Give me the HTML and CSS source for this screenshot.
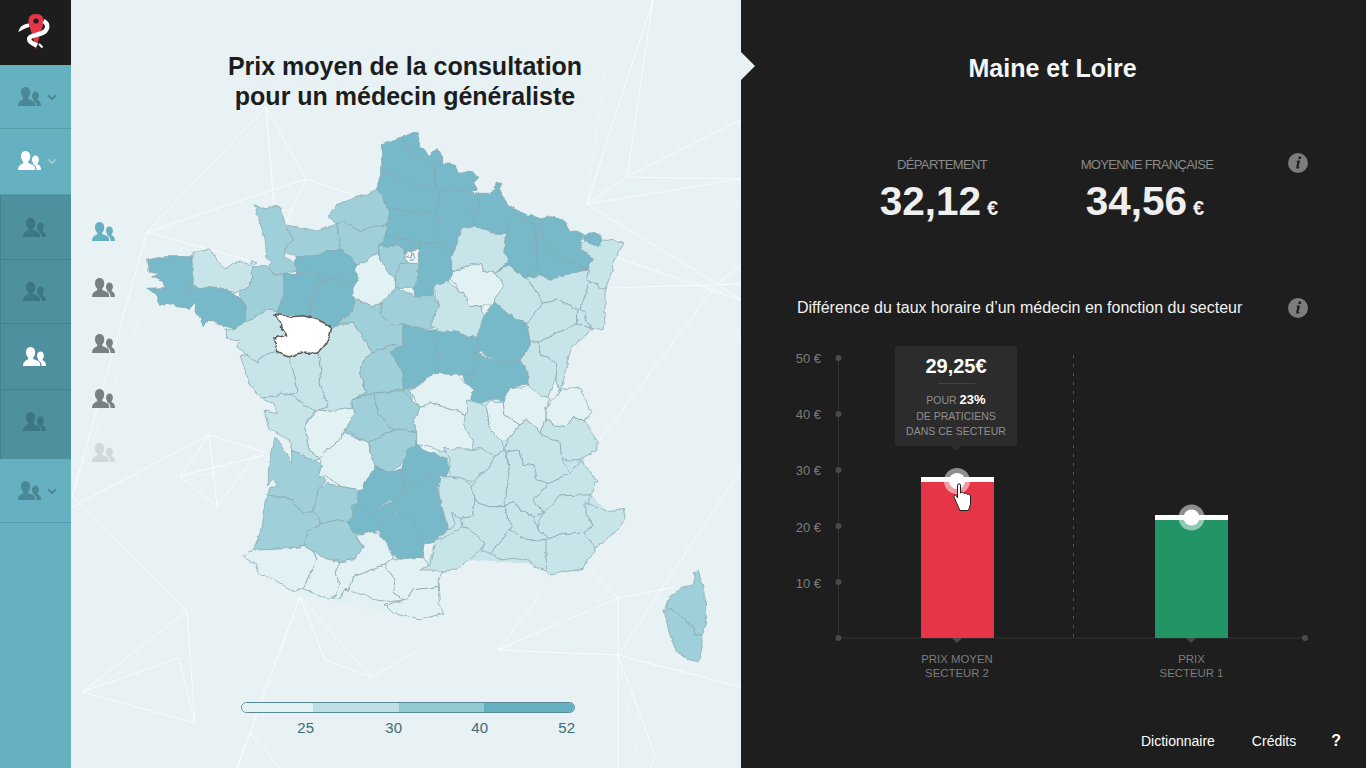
FILE: index.html
```html
<!DOCTYPE html>
<html lang="fr">
<head>
<meta charset="utf-8">
<title>Prix moyen de la consultation</title>
<link rel="stylesheet" href="styles.css">
</head>
<body>
<svg class="defs" width="0" height="0" aria-hidden="true">
  <filter id="rough" x="0" y="0" width="100%" height="100%" color-interpolation-filters="sRGB">
    <feTurbulence type="fractalNoise" baseFrequency=".13" numOctaves="2" seed="4" result="n"/>
    <feDisplacementMap in="SourceGraphic" in2="n" scale="4.500" xChannelSelector="R" yChannelSelector="G"/>
    <feGaussianBlur stdDeviation=".25"/>
  </filter>
  <symbol id="people" viewBox="0 0 23 19">
    <path d="M7.500 0C10.400 0 12.200 2.400 12.200 5.400C12.200 7.800 11.200 9.600 10.200 10.600V12C12.500 13 15.600 13.600 16.600 15.600C17 16.500 17.200 18 17.200 19H0C0 17.500 .2 16.300 .8 15.400C2 13.800 3.400 13.200 5.200 12.200V10.600C4 9.600 3 7.800 3 5.400C3 2.400 4.700 0 7.500 0Z"/>
    <path d="M17.500 4.400C19.500 4.400 20.900 6.200 20.900 8.400C20.900 10 20.200 11.300 19.600 12V13.200C21.200 14 23 14.800 23 19H18.600C18.600 17.400 18.200 15.600 17 14.400C16.400 13.900 15.800 13.500 15.200 13.200V12C14.600 11.300 14 10 14 8.400C14 6.200 15.500 4.400 17.500 4.400Z"/>
  </symbol>
  <symbol id="chev" viewBox="0 0 10 7">
    <path d="M1 1.200L5 5L9 1.200" fill="none" stroke="currentColor" stroke-width="2"/>
  </symbol>
  <symbol id="info" viewBox="0 0 20 20">
    <circle cx="10" cy="10" r="10" fill="#7c7c7c"/>
    <path d="M10.800 3.600h2.400l-.5 2.300h-2.400zM9.600 7.600h2.500l-1.600 6.300c-.1.500.4.400 1 .1l.2.800c-1.300 1-3.800 1.400-3.500-.5l1.200-5.200-1 .1.1-.8z" fill="#1e1e1e"/>
  </symbol>
</svg>

<div class="app">
  <nav class="side">
    <div class="logo">
      <svg width="71" height="65" viewBox="0 0 71 65">
        <path d="M18.500 32C19 27 24 23 30 23.500L29.500 27C26 27.500 22 30 18.500 32Z" fill="#fff"/>
        <path d="M36 14C41.500 14 44 17 43.500 22C43 27 39 36 36 50C33.500 36 29 27 28.500 22C28 17 30.500 14 36 14Z" fill="#e63546"/>
        <circle cx="36" cy="21" r="2.600" fill="#1d1d1d"/>
        <path d="M43.500 21C49 24 48.500 31 41 33.500C33 36 28 36 29.500 40.500C30.500 43 34 44 37 45.500" fill="none" stroke="#fff" stroke-width="4.500"/>
        <path d="M39 44L42.500 47.500" fill="none" stroke="#fff" stroke-width="2"/>
      </svg>
    </div>
    <a class="item h64"><svg class="pp"><use href="#people"/></svg><svg class="ch"><use href="#chev"/></svg></a>
    <a class="item h66 on up"><svg class="pp"><use href="#people"/></svg><svg class="ch"><use href="#chev"/></svg></a>
    <div class="subs">
      <a class="sub h65"><svg class="pp"><use href="#people"/></svg></a>
      <a class="sub h64"><svg class="pp"><use href="#people"/></svg></a>
      <a class="sub h66 on"><svg class="pp"><use href="#people"/></svg></a>
      <a class="sub h69 lift"><svg class="pp"><use href="#people"/></svg></a>
    </div>
    <a class="item h64"><svg class="pp"><use href="#people"/></svg><svg class="ch"><use href="#chev"/></svg></a>
  </nav>

  <main class="mapp">
    <svg class="net" viewBox="71 0 670 768" width="670" height="768">
      <g class="n1">
        <path d="M147 232L266 107M266 107L306 179M147 232L306 179M147 232L72 497M147 232L254 262M306 179L285 225M266 107L274 205M306 179L362 198"/>
        <path d="M72 507L209 435M209 435L265 452M209 435L180 476M180 476L217 507M217 507L209 435M217 507L255 455M180 476L265 455M72 497L187 611M187 611L82 692M82 692L195 723M195 723L187 611M82 692L179 658M179 658L195 723"/>
        <path d="M300 597L237 768M300 597L371 677M371 677L415 652M300 597L325 660M325 660L371 677M250 733L237 768M250 733L280 768"/>
        <path d="M498 650L618 655M498 650L618 598M590 570L618 598M498 650L540 595M618 598L675 587M618 655L618 768M618 655L741 687M618 655L655 755M655 755L650 768M618 655L741 470M618 598L618 655"/>
        <path d="M587 204L612 125M612 125L653 0M587 204L627 177M627 177L653 0M627 177L741 120M587 204L741 179M587 204L717 284M717 284L741 265M717 284L741 300M600 440L717 284M607 288L741 284M618 258L741 300M627 177L741 179"/>
      </g>
      <g class="n2">
        <path d="M147 232L362 198M266 107L275 225M72 495L147 300M72 520L262 455M180 476L265 470M82 692L187 640M300 597L260 700M498 650L600 600M605 70L587 204M741 200L640 210M717 284L741 340M618 655L640 768"/>
      </g>
    </svg>

    <h1 class="title">Prix moyen de la consultation<br>pour un médecin généraliste</h1>

    <svg class="map" viewBox="71 0 670 768" width="670" height="768">
      <g filter="url(#rough)">
      <!-- backing, so that no paper shows between departments -->
      <polygon class="k d" points="385,150 470,195 510,205 545,225 590,250 590,268 540,280 505,275 470,240 440,260 430,300 420,290 385,240"/>
      <polygon class="k c" points="300,240 335,225 378,197 395,250 395,320 340,340 310,260"/>
      <polygon class="k c" points="355,345 400,345 420,430 390,470 345,470 340,420"/>
      <polygon class="k b" points="290,360 350,375 350,410 300,440 275,420"/>
      <polygon class="k b" points="440,375 470,400 540,400 585,410 585,455 580,480 610,515 605,525 580,568 540,565 480,560 445,562 428,563 440,520 437,480"/>
      <polygon class="k a" points="248,555 420,560 443,612 385,612 300,595"/>
      <!-- west -->
      <g transform="translate(140 125) scale(.33333)">
        <polygon class="d" points="20,405 70,395 115,395 155,395 160,440 158,480 137,487 150,515 168,530 150,550 110,545 85,535 60,540 50,510 20,490 70,488 70,470 35,455 60,448 25,440"/>
        <polygon class="b" points="155,395 160,380 185,375 205,372 220,385 235,410 255,432 280,415 300,408 330,420 335,408 347,410 335,430 338,460 330,480 300,500 270,500 245,490 210,485 190,490 160,482 160,440"/>
        <polygon class="c" points="335,425 380,425 405,450 432,445 432,520 412,560 380,555 350,575 315,590 318,545 298,520 300,500 330,480 338,460"/>
        <polygon class="d" points="137,487 160,482 190,490 210,485 245,490 270,500 298,520 318,545 315,590 285,610 260,605 225,590 200,590 190,605 185,580 165,560 168,530 150,515"/>
        <polygon class="c" points="343,238 365,250 395,245 420,245 425,265 440,310 458,340 435,380 435,395 465,415 468,435 432,445 405,450 385,425 395,415 380,395 375,340 355,280"/>
        <polygon class="c" points="435,300 470,305 530,318 590,297 600,340 600,370 565,378 530,392 470,395 435,380 458,340 440,310"/>
        <polygon class="c" points="590,297 610,288 660,320 700,300 745,300 735,335 720,360 715,385 655,420 640,410 600,370 600,340"/>
        <polygon class="c" points="562,275 590,240 640,220 680,208 715,190 745,250 745,300 700,300 660,320 610,288 590,297"/>
        <polygon class="d" points="470,395 530,392 565,378 600,370 640,410 655,420 658,460 640,490 610,470 580,455 545,470 535,445 510,440 465,445 468,435 465,415"/>
        <polygon class="d" points="432,445 465,445 510,440 535,445 545,470 530,495 515,540 505,575 480,572 410,566 412,560 432,520"/>
        <polygon class="d" points="545,470 580,455 610,470 640,490 645,530 635,560 590,600 575,605 535,585 505,575 515,540 530,495"/>
        <polygon class="b" points="412,560 380,555 350,575 315,590 285,610 258,615 260,640 300,650 290,665 320,690 350,715 370,690 405,680 415,685 400,640 440,630 425,610 425,590 410,567"/>
      </g>
      <!-- centre-west, page coordinates -->
      <polygon class="b" points="240,355 247,355 257,363 263,355 275,352 288,357 293,370 298,390 293,395 280,393 273,397 260,397 250,385 245,370"/>
      <polygon class="b" points="288,357 300,353 318,353 322,370 320,383 328,407 315,412 298,400 293,395 298,390 293,370"/>
      <polygon class="b" points="318,353 325,345 332,327 337,325 353,322 372,352 360,368 360,375 367,392 352,400 352,407 333,412 318,410 328,407 320,383 322,370"/>
      <polygon class="c" points="360,368 372,352 390,345 402,347 390,352 402,370 403,390 373,393 352,400 367,392 360,375"/>
      <polygon class="c" points="353,297 372,307 380,303 380,313 390,323 403,325 402,347 390,345 372,352 353,322 337,325 352,312 355,302"/>
      <polygon class="a" points="355,267 378,253 380,260 396,279 397,287 395,300 380,303 372,307 353,297 353,288 359,278"/>
      <polygon class="d" points="403,325 417,328 430,330 438,352 437,375 433,373 420,385 403,390 402,370 390,352 402,347"/>
      <polygon class="d" points="430,330 452,333 455,330 468,337 477,338 480,352 475,355 473,375 457,375 433,373 437,375 438,352"/>
      <polygon class="d" points="475,352 500,363 520,360 528,372 528,385 510,387 503,403 497,398 480,403 470,400 468,387 463,375 473,375 475,355"/>
      <polygon class="a" points="409,390 420,385 433,373 457,375 473,390 467,415 437,405 430,402 420,408"/>
      <polygon class="b" points="528,342 539,342 540,355 548,357 557,365 555,375 555,380 548,397 540,397 528,385 528,372 520,360 529,348"/>
      <!-- north and east -->
      <g transform="translate(380 125) scale(.33333)">
        <polygon class="d" points="5,60 65,35 85,75 100,95 140,100 165,135 165,190 130,185 100,180 60,165 30,142 5,150 5,100"/>
        <polygon class="d" points="65,35 110,22 122,55 120,68 140,85 145,95 175,72 188,95 188,115 225,120 235,145 270,140 293,155 285,175 293,195 270,200 235,195 180,197 165,190 165,135 140,100 100,95 85,75"/>
        <polygon class="d" points="5,150 30,142 60,165 100,180 130,185 165,190 180,197 172,255 130,268 90,260 25,250 -10,190"/>
        <polygon class="d" points="25,250 90,260 130,268 172,255 175,300 160,320 180,352 120,357 15,335 25,300"/>
        <polygon class="d" points="180,197 235,195 270,200 293,205 298,240 275,270 282,300 240,315 235,350 215,395 180,352 160,320 175,300 172,255"/>
        <polygon class="d" points="293,205 330,205 345,195 348,172 362,175 362,205 385,240 412,265 385,290 380,325 340,325 282,300 275,270 298,240"/>
        <polygon class="d" points="15,335 120,350 118,375 85,378 72,375 60,362 -5,365"/>
        <polygon class="d" points="120,357 180,352 215,392 218,430 205,470 165,480 160,510 105,515 100,485 110,440 118,415 118,375"/>
        <polygon class="c" points="-5,365 60,362 72,375 72,395 85,415 60,415 48,462 28,445 0,405"/>
        <polygon class="c" points="60,415 118,415 105,487 50,487 48,462"/>
        <polygon class="p" points="72,395 85,378 118,375 118,415 85,415"/>
        <path class="pl" d="M80 395L100 385L105 400L92 408M95 378L92 408M72 395L92 398"/>
        <polygon class="b" points="240,315 282,300 340,325 380,325 375,385 385,410 345,445 310,435 300,415 215,440 215,395 235,350"/>
        <polygon class="a" points="210,462 215,440 300,415 310,435 345,445 370,480 365,510 335,540 305,540 270,545 250,505 235,500 222,475"/>
        <polygon class="d" points="385,290 412,265 430,290 460,295 470,365 470,430 435,460 385,410 375,385 380,325"/>
        <polygon class="d" points="430,290 450,268 480,282 490,345 535,395 625,435 570,445 505,465 490,450 470,430 470,365 460,295"/>
        <polygon class="d" points="480,282 510,275 550,285 570,320 590,318 610,330 605,350 600,370 640,400 625,435 535,395 490,345"/>
        <polygon class="d" points="610,335 640,322 665,335 670,355 655,365 615,350"/>
        <polygon class="b" points="600,370 605,355 615,350 655,365 670,345 735,350 700,410 695,440 675,495 620,460 625,435 640,400"/>
        <polygon class="b" points="630,468 675,495 675,570 670,610 635,615 620,580 600,555"/>
        <polygon class="b" points="435,460 490,450 505,465 570,445 625,435 620,460 630,468 600,555 570,540 530,525 490,535 465,490"/>
        <polygon class="b" points="345,445 385,420 435,460 465,490 490,535 440,595 415,585 385,565 345,530 370,480"/>
        <polygon class="b" points="490,535 530,525 570,540 590,555 590,595 530,625 478,650 450,650 440,595"/>
        <polygon class="b" points="590,595 630,610 620,630 575,665 560,720 552,760 540,800 525,750 530,720 505,695 480,690 478,650 530,625"/>
        <polygon class="b" points="590,555 615,560 620,590 630,610 590,595"/>
        <polygon class="d" points="345,530 385,565 415,585 440,595 450,650 448,670 420,705 360,715 300,680 290,640 310,575"/>
        <polygon class="b" points="165,478 205,470 235,500 250,505 270,545 305,540 310,575 290,640 260,635 220,615 185,620 150,600 178,545 165,510"/>
        <polygon class="c" points="5,530 50,487 105,515 160,510 178,545 150,600 160,610 110,610 70,600 30,598 0,565"/>
      </g>
      <!-- south-west -->
      <g transform="translate(230 370) scale(.33333)">
        <polygon class="b" points="90,80 130,80 150,70 190,75 205,90 255,125 220,170 235,205 235,240 270,265 240,280 210,250 185,240 180,215 150,195 120,180 105,120 145,130 125,100"/>
        <polygon class="c" points="365,90 430,70 445,130 490,180 415,220 345,180 370,130"/>
        <polygon class="c" points="430,70 520,62 570,115 550,160 560,185 505,178 490,180 445,130"/>
        <polygon class="c" points="490,180 505,178 560,185 560,230 515,280 485,310 435,290 415,220"/>
        <polygon class="a" points="570,115 600,95 620,105 710,135 725,190 735,235 640,245 590,225 560,230 560,185 550,160"/>
        <polygon class="a" points="220,170 265,120 310,125 365,112 375,130 345,180 325,210 270,265 235,240 235,205"/>
        <polygon class="a" points="270,265 325,210 345,190 415,220 435,290 395,360 335,350 290,320 265,320"/>
        <polygon class="d" points="435,290 485,310 515,295 525,355 485,390 420,430 385,405 380,370 395,360"/>
        <polygon class="d" points="515,295 530,240 560,225 580,240 650,265 660,300 620,350 590,310 570,340 525,355"/>
        <polygon class="d" points="485,390 525,355 570,340 590,310 620,350 640,430 675,460 640,490 615,510 585,525 555,470 500,440"/>
        <polygon class="d" points="370,400 385,405 420,430 485,395 495,435 460,450 445,480 400,500 370,490 350,455 368,435"/>
        <polygon class="d" points="460,450 495,435 545,440 585,525 580,560 510,568 480,550 445,480"/>
        <polygon class="c" points="135,200 185,280 185,240 210,250 275,285 265,320 290,330 265,360 250,425 215,430 190,390 140,380 110,375 125,350 145,345 125,330 115,345 115,300"/>
        <polygon class="c" points="110,375 140,380 190,390 215,430 250,425 270,445 270,460 230,485 225,530 130,535 70,540 90,490 105,420"/>
        <polygon class="c" points="290,340 335,350 395,360 380,370 385,405 368,405 368,435 350,455 320,450 270,462 270,445 250,425 265,360"/>
        <polygon class="c" points="230,485 270,462 320,450 350,455 370,490 400,535 370,570 330,575 280,565 225,530"/>
        <polygon class="a" points="70,538 130,535 225,530 250,545 260,570 245,600 220,655 190,665 135,630 85,610 75,580 40,560"/>
        <polygon class="a" points="250,540 280,565 330,575 315,610 330,640 320,665 305,685 270,680 220,655 245,600 260,570"/>
        <polygon class="a" points="330,575 370,570 400,535 380,500 425,485 445,490 470,520 490,565 465,585 400,610 370,620 360,660 340,660 335,685 310,685 320,665 330,640 315,610"/>
        <polygon class="a" points="465,585 490,565 510,568 580,560 600,590 640,600 625,625 625,650 545,660 535,685 520,690 490,665 495,630"/>
        <polygon class="a" points="370,620 400,610 465,585 495,630 490,665 520,690 480,695 440,690 385,670 345,660 360,660"/>
        <polygon class="a" points="465,705 520,690 535,685 545,660 625,650 628,700 640,730 570,750 490,730"/>
      </g>
      <!-- south-east -->
      <g transform="translate(440 370) scale(.33333)">
        <polygon class="b" points="-60,600 -30,585 -15,510 30,495 45,485 65,470 90,475 135,520 120,540 60,590 0,610 -10,600"/>
        <polygon class="b" points="-5,350 0,320 30,320 60,325 95,345 105,385 100,440 65,445 35,430 45,460 25,480 0,390"/>
        <polygon class="b" points="10,235 95,238 120,232 165,258 145,295 95,335 60,322 30,320 30,265"/>
        <polygon class="b" points="80,90 120,100 140,110 150,180 185,215 195,240 165,258 120,232 95,238 100,215 70,165 80,130"/>
        <polygon class="a" points="140,110 150,90 190,100 195,135 240,165 205,205 185,215 150,180"/>
        <polygon class="a" points="190,100 210,50 250,55 265,45 300,80 330,85 318,110 318,150 300,185 260,150 240,165 195,135"/>
        <polygon class="a" points="320,110 365,60 420,55 435,85 455,125 435,155 400,140 380,170 345,165 318,150"/>
        <polygon class="b" points="318,150 345,165 380,170 400,140 435,155 475,215 470,240 425,265 395,275 365,265 360,220 335,210 300,185"/>
        <polygon class="b" points="195,240 205,205 240,165 260,150 300,185 335,210 360,220 365,265 388,310 325,340 285,325 283,280 250,285 240,240 200,245"/>
        <polygon class="b" points="200,245 240,240 250,285 283,280 285,325 325,340 300,370 280,385 310,430 280,440 240,420 220,395 190,410 210,310"/>
        <polygon class="b" points="165,258 195,240 210,310 190,410 150,410 115,400 105,385 95,345 145,295"/>
        <polygon class="b" points="388,310 420,270 445,300 470,335 455,375 400,378 360,378 340,400 330,425 310,430 280,385 300,370 325,340"/>
        <polygon class="b" points="100,440 105,385 115,400 150,410 190,410 215,470 180,515 150,550 125,540 135,520 90,475 65,470 65,445"/>
        <polygon class="b" points="190,410 220,395 240,420 280,440 295,480 330,505 300,515 250,505 210,478 215,470"/>
        <polygon class="b" points="210,478 250,505 300,515 320,510 318,560 325,605 280,590 270,573 220,565 180,570 150,550 180,515"/>
        <polygon class="b" points="318,510 365,490 430,490 465,520 465,545 440,570 430,595 380,605 335,615 320,600 318,560"/>
        <polygon class="b" points="295,455 310,430 340,400 360,378 420,375 455,375 435,430 460,465 430,490 365,490 330,505 295,480"/>
        <polygon class="b" points="435,395 465,410 505,425 550,415 555,445 535,480 510,495 490,520 465,530 430,490 460,465 435,430"/>
        <polygon class="c" points="678,715 690,680 730,650 760,645 768,625 760,605 775,600 785,640 795,680 800,760 785,795 765,795 760,770 730,745 700,720"/>
        <polygon class="c" points="672,720 700,720 730,745 760,770 765,795 785,795 787,830 775,875 750,870 710,845 695,810 685,780 678,745"/>
      </g>
      <polygon class="sel" points="273.700,314 290,316.700 303.300,315.700 318.300,320 331.700,326.700 330,335 325,345 318.300,353.300 300,353.300 288.300,356.700 278.300,353.300 273.300,338.300 286.700,335 281.700,328.300 281.700,321.700"/>
      </g>
    </svg>

    <ul class="cats">
      <li class="cat teal"><svg class="pp"><use href="#people"/></svg></li>
      <li class="cat"><svg class="pp"><use href="#people"/></svg></li>
      <li class="cat"><svg class="pp"><use href="#people"/></svg></li>
      <li class="cat"><svg class="pp"><use href="#people"/></svg></li>
      <li class="cat pale"><svg class="pp"><use href="#people"/></svg></li>
    </ul>

    <div class="legend">
      <div class="bar"><i class="s1"></i><i class="s2"></i><i class="s3"></i><i class="s4"></i></div>
      <div class="ticks"><span class="s1">25</span><span class="s2">30</span><span class="s3">40</span><span class="s4">52</span></div>
    </div>
  </main>

  <section class="panel">
    <h2 class="dept">Maine et Loire</h2>
    <div class="stats">
      <div class="stat first"><div class="lab">DÉPARTEMENT</div><div class="val">32,12<small>€</small></div></div>
      <div class="stat"><div class="lab">MOYENNE FRANÇAISE</div><div class="val">34,56<small>€</small></div></div>
      <svg class="info"><use href="#info"/></svg>
    </div>
    <div class="subhead">
      <h3>Différence du taux horaire d’un médecin en fonction du secteur</h3>
      <svg class="info"><use href="#info"/></svg>
    </div>
    <div class="chart">
      <svg class="plot" viewBox="741 340 625 350" width="625" height="350">
        <g class="axis">
          <path d="M838.500 358V638M838 638H1305"/>
          <path class="dash" d="M1073.500 355V638"/>
        </g>
        <g class="dots">
          <circle cx="838.500" cy="358" r="3"/><circle cx="838.500" cy="414" r="3"/><circle cx="838.500" cy="470" r="3"/><circle cx="838.500" cy="526" r="3"/><circle cx="838.500" cy="582" r="3"/><circle cx="838.500" cy="638" r="3"/><circle cx="1305" cy="638" r="3"/>
          <path d="M952 638h10l-5 5zM1186 638h10l-5 5z"/>
        </g>
        <g class="ylab">
          <text x="821" y="363">50 €</text><text x="821" y="419">40 €</text><text x="821" y="475">30 €</text><text x="821" y="532">20 €</text><text x="821" y="588">10 €</text>
        </g>
        <rect class="red" x="921" y="477" width="73" height="161"/>
        <rect class="top" x="921" y="477" width="73" height="5"/>
        <circle class="halo" cx="957" cy="481" r="13"/>
        <circle class="dot" cx="957" cy="481" r="8"/>
        <rect class="green" x="1155" y="515" width="73" height="123"/>
        <rect class="top" x="1155" y="515" width="73" height="5"/>
        <circle class="halo" cx="1191.500" cy="517.500" r="13"/>
        <circle class="dot" cx="1191.500" cy="517.500" r="8"/>
        <path class="hand" transform="translate(953 483)" d="M4.500 2C4.500 .5 7.500 .5 7.500 2V10C8.500 9 10.500 9 11 10.500C12 9.500 14 10 14.500 11.500C15.500 10.700 17.500 11.300 17.500 13V21L15.500 27.500H7L4 21L1 14C.4 12 2.500 11.500 3.500 13L4.500 15Z"/>
        <g class="xlab">
          <text x="957" y="663">PRIX MOYEN</text><text x="957" y="677">SECTEUR 2</text>
          <text x="1191.500" y="663">PRIX</text><text x="1191.500" y="677">SECTEUR 1</text>
        </g>
      </svg>
      <div class="tip">
        <div class="price">29,25€</div>
        <div class="rule"></div>
        <p>POUR <b>23%</b><br>DE PRATICIENS<br>DANS CE SECTEUR</p>
      </div>
    </div>
    <footer class="foot"><a>Dictionnaire</a><a>Crédits</a><a class="q">?</a></footer>
  </section>
</div>
</body>
</html>
```

FILE: styles.css
```css
* { box-sizing: border-box; }
html, body { margin: 0; height: 100%; }
body { font-family: "Liberation Sans", Arial, sans-serif; overflow: hidden; background: #1e1e1e; }
.defs { position: absolute; }
.app { display: flex; width: 1366px; height: 768px; }

/* sidebar */
.side { width: 71px; flex: none; background: #66b1c1; display: flex; flex-direction: column; }
.logo { height: 65px; background: #1d1d1d; flex: none; }
.logo svg { display: block; }
.item { display: flex; align-items: center; padding-left: 18px; gap: 6px; color: #44808f; border-bottom: 1px solid #569aa9; flex: none; }
.item.up { padding-bottom: 3px; }
.item .pp { width: 23px; height: 19px; fill: #4a8797; }
.ch { width: 10px; height: 7px; color: #4a8797; margin-top: 2px; }
.item.on .pp { fill: #fff; }
.item.on .ch { color: #9ec5ce; }
.subs { background: #4f909f; box-shadow: inset 1px 0 0 #47838f; flex: none; }
.sub { display: flex; align-items: center; padding-left: 23px; border-bottom: 1px solid #47838f; }
.sub:last-child { border-bottom: 0; }
.sub.lift { padding-bottom: 6px; }
.sub .pp { width: 23px; height: 19px; fill: #3c7585; }
.sub.on .pp { fill: #fff; }
.h64 { height: 64px; }
.h65 { height: 65px; }
.h66 { height: 66px; }
.h69 { height: 69px; }

/* map column */
.mapp { position: relative; width: 670px; flex: none; background: #e8f1f4; overflow: hidden; }
.net { position: absolute; left: 0; top: 0; }
.net path { fill: none; stroke: #fff; }
.n1 { stroke-width: 1; opacity: .75; }
.n2 { stroke-width: 1; opacity: .3; }
.map { position: absolute; left: 0; top: 0; }
.map polygon { stroke: #8aa9b1; stroke-width: .8; stroke-linejoin: round; vector-effect: non-scaling-stroke; }
.map .k { stroke: none; }
.map .a { fill: #e2f1f4; }
.map .b { fill: #c7e4e9; }
.map .c { fill: #9fd0d9; }
.map .d { fill: #77b9c9; }
.map .p { fill: #f1f7f8; }
.map .pl { fill: none; stroke: #7f9fa7; stroke-width: .8; vector-effect: non-scaling-stroke; }
.map .sel { fill: #fff; stroke: #5c5c5c; stroke-width: 1.6; }
.title { position: relative; margin: 0; padding: 51px 2px 0 0; text-align: center; font-size: 25px; line-height: 30px; font-weight: 700; color: #1d1d1d; }

.cats { position: absolute; left: 21px; top: 222px; margin: 0; padding: 0; list-style: none; display: flex; flex-direction: column; gap: 36px; }
.cat { height: 19px; }
.cat:nth-child(-n+2) { margin-bottom: 1px; }
.cat:last-child { margin-top: -1px; }
.cat .pp { display: block; width: 23px; height: 19px; fill: #7a7f82; }
.cat.teal .pp { fill: #66b1c1; }
.cat.pale .pp { fill: #d2d8da; }

.legend { position: absolute; left: 170px; top: 702px; width: 334px; }
.bar { display: flex; height: 11px; border: 1px solid #5a8995; border-radius: 6px; overflow: hidden; }
.bar i { display: block; }
.bar .s1 { width: 71px; background: #e2f1f4; }
.bar .s2 { width: 86px; background: #bcdfe4; }
.bar .s3 { width: 85px; background: #90c9d1; }
.bar .s4 { flex: 1; background: #63b0bf; }
.ticks { display: flex; font-size: 15px; line-height: 17px; color: #3f6b78; margin-top: 6px; text-align: right; }
.ticks .s1 { width: 73px; }
.ticks .s2 { width: 88px; }
.ticks .s3 { width: 86px; }
.ticks .s4 { width: 87px; }

/* right panel */
.panel { position: relative; flex: 1; background: #1e1e1e; color: #fff; display: flex; flex-direction: column; }
.panel::before { content: ""; position: absolute; left: 0; top: 52px; border-left: 14px solid #e8f1f4; border-top: 14px solid transparent; border-bottom: 14px solid transparent; }
.dept { margin: 0; padding: 53px 2px 0 0; text-align: center; font-size: 25px; line-height: 30px; font-weight: 700; color: #f5f5f5; }
.stats { position: relative; display: flex; margin-top: 74px; padding-left: 111px; height: 80px; }
.stat { width: 205px; }
.lab { font-size: 13px; line-height: 15px; color: #8a8a8a; text-align: center; letter-spacing: -.65px; width: 180px; }
.val { font-size: 40.500px; line-height: 48px; font-weight: 700; color: #efefef; text-align: center; width: 176px; margin-top: 5px; }
.first .val { margin-left: -1px; }
.val small { font-size: 20px; margin-left: 6px; }
.info { position: absolute; right: 58px; width: 20px; height: 20px; top: 0; }
.stats .info { top: -4px; }
.subhead { position: relative; margin-top: 61px; padding-left: 56px; height: 20px; }
.subhead h3 { margin: 0; font-size: 16px; line-height: 20px; font-weight: 400; color: #f2f2f2; }
.subhead .info { top: 0; }
.chart { position: absolute; left: 0; top: 340px; width: 625px; height: 350px; }
.plot { display: block; }
.axis path { fill: none; stroke: #323232; }
.axis .dash { stroke: #555; stroke-dasharray: 3 6; }
.dots { fill: #4a4a4a; }
.ylab text { fill: #7c7c7c; font-size: 13px; text-anchor: end; }
.xlab text { fill: #7c7c7c; font-size: 11.400px; text-anchor: middle; }
.red { fill: #e63546; }
.green { fill: #229465; }
.top, .dot { fill: #fff; }
.halo { fill: #fff; opacity: .5; }
.hand { fill: #fff; stroke: #222; stroke-width: 1; }
.tip { position: absolute; left: 154px; top: 6px; width: 122px; height: 100px; background: #2c2c2c; border-radius: 3px; text-align: center; padding-top: 9px; }
.tip::after { content: ""; position: absolute; left: 56px; bottom: -5px; border-top: 5px solid #2c2c2c; border-left: 5px solid transparent; border-right: 5px solid transparent; }
.price { font-size: 20px; line-height: 23px; font-weight: 700; color: #fff; }
.rule { width: 37px; height: 1px; background: #444; margin: 5px auto 0; }
.tip p { margin: 8px 0 0; font-size: 10.500px; line-height: 15.500px; color: #8f8f8f; }
.tip b { font-size: 13px; color: #fff; }
.foot { position: absolute; right: 0; top: 732px; display: flex; font-size: 14px; line-height: 18px; color: #fff; padding-right: 25px; }
.foot a { margin-left: 37px; }
.foot .q { font-weight: 700; font-size: 16px; margin-left: 35px; }
```
